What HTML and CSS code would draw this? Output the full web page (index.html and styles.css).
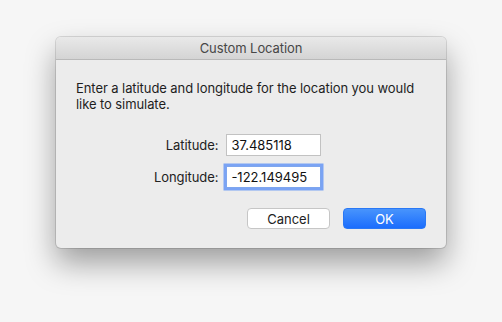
FILE: index.html
```html
<!DOCTYPE html>
<html>
<head>
  <title>Custom Location</title>
  <link rel="stylesheet" href="styles.css">
</head>
<body>
  <div class="dialog">
    <div class="titlebar">Custom Location</div>
    <div class="content">
      <p class="message">Enter a latitude and longitude for the location you would like to simulate.</p>
      <div class="fields">
        <label for="lat">Latitude:</label>
        <input type="text" id="lat" value="37.485118">
        <label for="lng">Longitude:</label>
        <input type="text" id="lng" class="focused" value="-122.149495">
      </div>
      <div class="buttons">
        <button class="btn cancel">Cancel</button>
        <button class="btn ok">OK</button>
      </div>
    </div>
  </div>
</body>
</html>
```

FILE: styles.css
```css
body {
  margin: 0;
  padding-top: 37px;
  height: 322px;
  box-sizing: border-box;
  background: #f6f6f6;
  font-family: Inter, "Noto Sans", sans-serif;
  font-size: 13px;
  letter-spacing: -0.08px;
  color: #222;
}
.dialog {
  width: 390px;
  height: 211px;
  margin: 0 auto;
  background: #ececec;
  border-radius: 5px;
  box-shadow: 0 0 0 1px rgba(0, 0, 0, 0.12), 0 15px 30px rgba(0, 0, 0, 0.36);
  overflow: hidden;
}
.titlebar {
  height: 22px;
  line-height: 22px;
  text-align: center;
  color: #474747;
  background: linear-gradient(to bottom, #e9e9e9, #d4d4d4);
  border-bottom: 1px solid #b9b9b9;
}
.content {
  padding: 20px 20px 0 20px;
}
.message {
  margin: 0;
  line-height: 16px;
  color: #1e1e1e;
}
.fields {
  display: grid;
  grid-template-columns: auto 95px;
  column-gap: 8px;
  row-gap: 10px;
  align-items: center;
  margin: 22px 0 0 78px;
  width: max-content;
}
.fields label {
  text-align: right;
}
.fields input {
  height: 22px;
  box-sizing: border-box;
  border: 1px solid #c2c2c2;
  background: #fff;
  padding: 0 4px;
  font: inherit;
  color: #111;
  outline: none;
}
.fields input.focused {
  border-color: #7ea6ee;
  box-shadow: 0 0 0 2.5px #7aa3f4;
}
.buttons {
  display: flex;
  justify-content: flex-end;
  gap: 13px;
  margin-top: 20px;
}
.btn {
  width: 83px;
  height: 21px;
  border-radius: 4px;
  font: inherit;
  padding: 0;
}
.cancel {
  background: #fff;
  border: 1px solid #c6c6c6;
  color: #222;
}
.ok {
  background: linear-gradient(to bottom, #4894fc, #1b6dfd);
  border: 1px solid #2a78f5;
  color: #fff;
}
```
